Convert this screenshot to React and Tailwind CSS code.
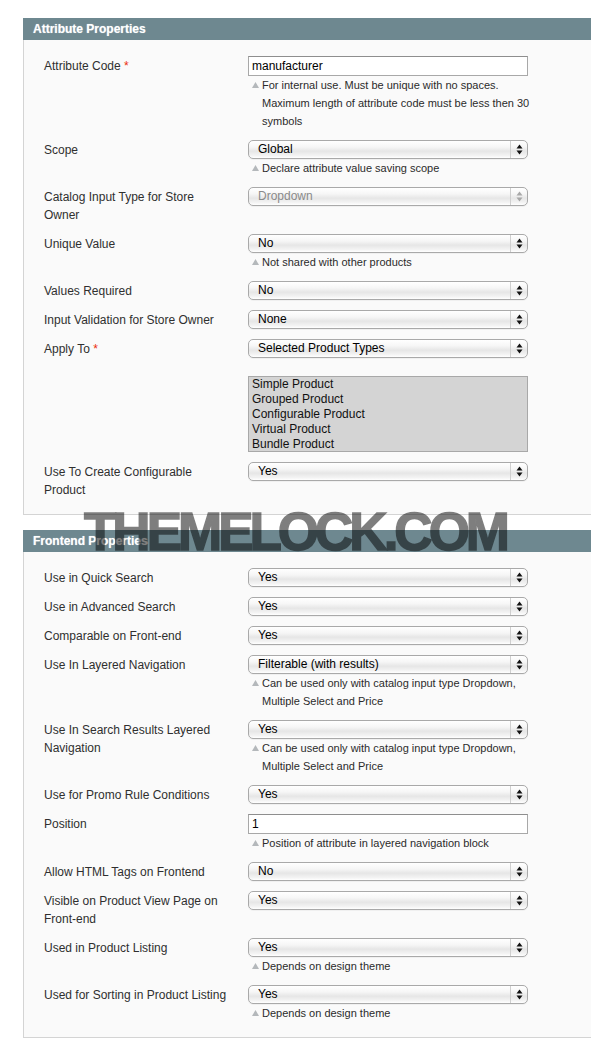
import React from 'react';

const font = { fontFamily: '"Liberation Sans", Arial, Helvetica, sans-serif' };

const Arrows = ({ disabled }) => (
  <svg width="7" height="11" viewBox="0 0 7 11" className="block">
    <path d="M3.5 0.5 L6.5 4.5 L0.5 4.5 Z" fill={disabled ? '#a8a8a8' : '#111'} />
    <path d="M3.5 10.5 L6.5 6.5 L0.5 6.5 Z" fill={disabled ? '#a8a8a8' : '#111'} />
  </svg>
);

const Hint = ({ children }) => (
  <div className="flex w-[290px] text-[11px] leading-[18px] text-[#2b2b2b]">
    <span className="w-[14px] shrink-0 pl-[4px] pt-[6px]">
      <svg width="7" height="6" viewBox="0 0 7 6" className="block">
        <path d="M3.5 0 L7 6 L0 6 Z" fill="#b4b8bb" />
      </svg>
    </span>
    <span>{children}</span>
  </div>
);

const Select = ({ value, disabled }) => (
  <div className="flex h-[19px] w-[280px] items-stretch rounded-[5px] border border-[#a9a9a9] bg-[linear-gradient(to_bottom,#ffffff_0%,#f6f6f6_35%,#e6e6e6_60%,#f3f3f3_85%,#ffffff_100%)] shadow-[0_1px_0_rgba(0,0,0,0.04)]">
    <span
      className={`flex-1 pl-[9px] text-[12px] leading-[16px] ${disabled ? 'text-[#8a8a8a]' : 'text-black'}`}
    >
      {value}
    </span>
    <span className="flex w-[17px] items-center justify-center border-l border-[#cfcfcf]">
      <Arrows disabled={disabled} />
    </span>
  </div>
);

const TextInput = ({ value }) => (
  <div className="h-[20px] w-[280px] border border-[#a8a8a8] border-t-[#8e8e8e] bg-white pl-[3px] text-[12px] leading-[18px] text-black">
    {value}
  </div>
);

const Row = ({ label, required, children }) => (
  <div className="mb-[10px] flex">
    <div className="w-[204px] shrink-0 pr-[19px] pt-[1px] text-[12px] leading-[18px] text-[#2f2f2f]">
      {label}
      {required && <span className="text-[#eb2d0c]"> *</span>}
    </div>
    <div className="w-[280px]">{children}</div>
  </div>
);

const Section = ({ title, children }) => (
  <div className="ml-[23px]">
    <div className="h-[22px] bg-[#6e8890] pl-[10px] text-[12px] font-bold leading-[22px] text-white [text-shadow:0_0_1px_rgba(255,255,255,0.6)]">
      {title}
    </div>
    <div className="border-b border-l border-[#d4d4d4] bg-[#fafafa] pb-[5px] pl-[20px] pt-[16px]">
      {children}
    </div>
  </div>
);

export default function App() {
  return (
    <div className="relative min-h-[1060px] w-[591px] overflow-hidden bg-white pt-[18px]" style={font}>
      <Section title="Attribute Properties">
        <Row label="Attribute Code" required>
          <TextInput value="manufacturer" />
          <Hint>
            For internal use. Must be unique with no spaces.
            <br />
            Maximum length of attribute code must be less then 30
            <br />
            symbols
          </Hint>
        </Row>
        <Row label="Scope">
          <Select value="Global" />
          <Hint>Declare attribute value saving scope</Hint>
        </Row>
        <Row label="Catalog Input Type for Store Owner">
          <Select value="Dropdown" disabled />
        </Row>
        <Row label="Unique Value">
          <Select value="No" />
          <Hint>Not shared with other products</Hint>
        </Row>
        <Row label="Values Required">
          <Select value="No" />
        </Row>
        <Row label="Input Validation for Store Owner">
          <Select value="None" />
        </Row>
        <Row label="Apply To" required>
          <Select value="Selected Product Types" />
          <div className="mt-[18px] h-[76px] w-[280px] border border-[#a8a8a8] bg-[#d4d4d4] pl-[3px] text-[12px] leading-[15px] text-[#111]">
            <div>Simple Product</div>
            <div>Grouped Product</div>
            <div>Configurable Product</div>
            <div>Virtual Product</div>
            <div>Bundle Product</div>
          </div>
        </Row>
        <Row label="Use To Create Configurable Product">
          <Select value="Yes" />
        </Row>
      </Section>

      <div className="h-[15px]" />

      <Section title="Frontend Properties">
        <Row label="Use in Quick Search">
          <Select value="Yes" />
        </Row>
        <Row label="Use in Advanced Search">
          <Select value="Yes" />
        </Row>
        <Row label="Comparable on Front-end">
          <Select value="Yes" />
        </Row>
        <Row label="Use In Layered Navigation">
          <Select value="Filterable (with results)" />
          <Hint>
            Can be used only with catalog input type Dropdown,
            <br />
            Multiple Select and Price
          </Hint>
        </Row>
        <Row label="Use In Search Results Layered Navigation">
          <Select value="Yes" />
          <Hint>
            Can be used only with catalog input type Dropdown,
            <br />
            Multiple Select and Price
          </Hint>
        </Row>
        <Row label="Use for Promo Rule Conditions">
          <Select value="Yes" />
        </Row>
        <Row label="Position">
          <TextInput value="1" />
          <Hint>Position of attribute in layered navigation block</Hint>
        </Row>
        <Row label="Allow HTML Tags on Frontend">
          <Select value="No" />
        </Row>
        <Row label="Visible on Product View Page on Front-end">
          <Select value="Yes" />
        </Row>
        <Row label="Used in Product Listing">
          <Select value="Yes" />
          <Hint>Depends on design theme</Hint>
        </Row>
        <Row label="Used for Sorting in Product Listing">
          <Select value="Yes" />
          <Hint>Depends on design theme</Hint>
        </Row>
      </Section>

      <div className="pointer-events-none absolute left-[84px] top-[505px] whitespace-nowrap text-[53px] font-bold leading-[53px] tracking-[-4px] text-black opacity-50 [-webkit-text-stroke:1.5px_black]">
        THEMELOCK.COM
      </div>
    </div>
  );
}
